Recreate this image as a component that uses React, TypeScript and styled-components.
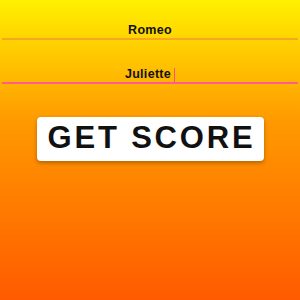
import React from "react";
import styled, { createGlobalStyle } from "styled-components";

const Global = createGlobalStyle`
  html, body { margin: 0; padding: 0; }
  body { font-family: "Liberation Sans", Arial, sans-serif; }
`;

const Screen = styled.div`
  width: 300px;
  height: 300px;
  background: linear-gradient(to bottom, #fff000 0%, #ff9a00 40%, #ff5a00 100%);
  display: flex;
  flex-direction: column;
  align-items: center;
  padding: 22px 2px 0;
  box-sizing: border-box;
`;

const Field = styled.div<{ $line: string; $gap: number }>`
  width: 100%;
  display: flex;
  justify-content: center;
  align-items: flex-end;
  height: 16px;
  border-bottom: 2px solid ${(p) => p.$line};
  margin-bottom: ${(p) => p.$gap}px;
`;

const Label = styled.span`
  font-weight: bold;
  font-size: 12.5px;
  color: #111;
  letter-spacing: 0.3px;
  line-height: 14px;
  padding-bottom: 1px;
`;

const Caret = styled.span`
  display: inline-block;
  width: 1px;
  height: 14px;
  background: #ff4f8b;
  margin-left: 3px;
`;

const Button = styled.button`
  margin-top: 33px;
  width: 227px;
  height: 44px;
  background: #fff;
  border: none;
  border-radius: 4px;
  box-shadow: 0 2px 4px rgba(0, 0, 0, 0.3);
  font-family: "Liberation Sans", Arial, sans-serif;
  font-weight: bold;
  font-size: 31px;
  letter-spacing: 2.8px;
  color: #111;
  padding: 0 0 2px 3px;
  display: flex;
  align-items: center;
  justify-content: center;
`;

export default function App() {
  return (
    <>
      <Global />
      <Screen>
        <Field $line="#f5a623" $gap={26}>
          <Label>Romeo</Label>
        </Field>
        <Field $line="#ff5c8a" $gap={0}>
          <Label>Juliette</Label>
          <Caret />
        </Field>
        <Button>GET SCORE</Button>
      </Screen>
    </>
  );
}
